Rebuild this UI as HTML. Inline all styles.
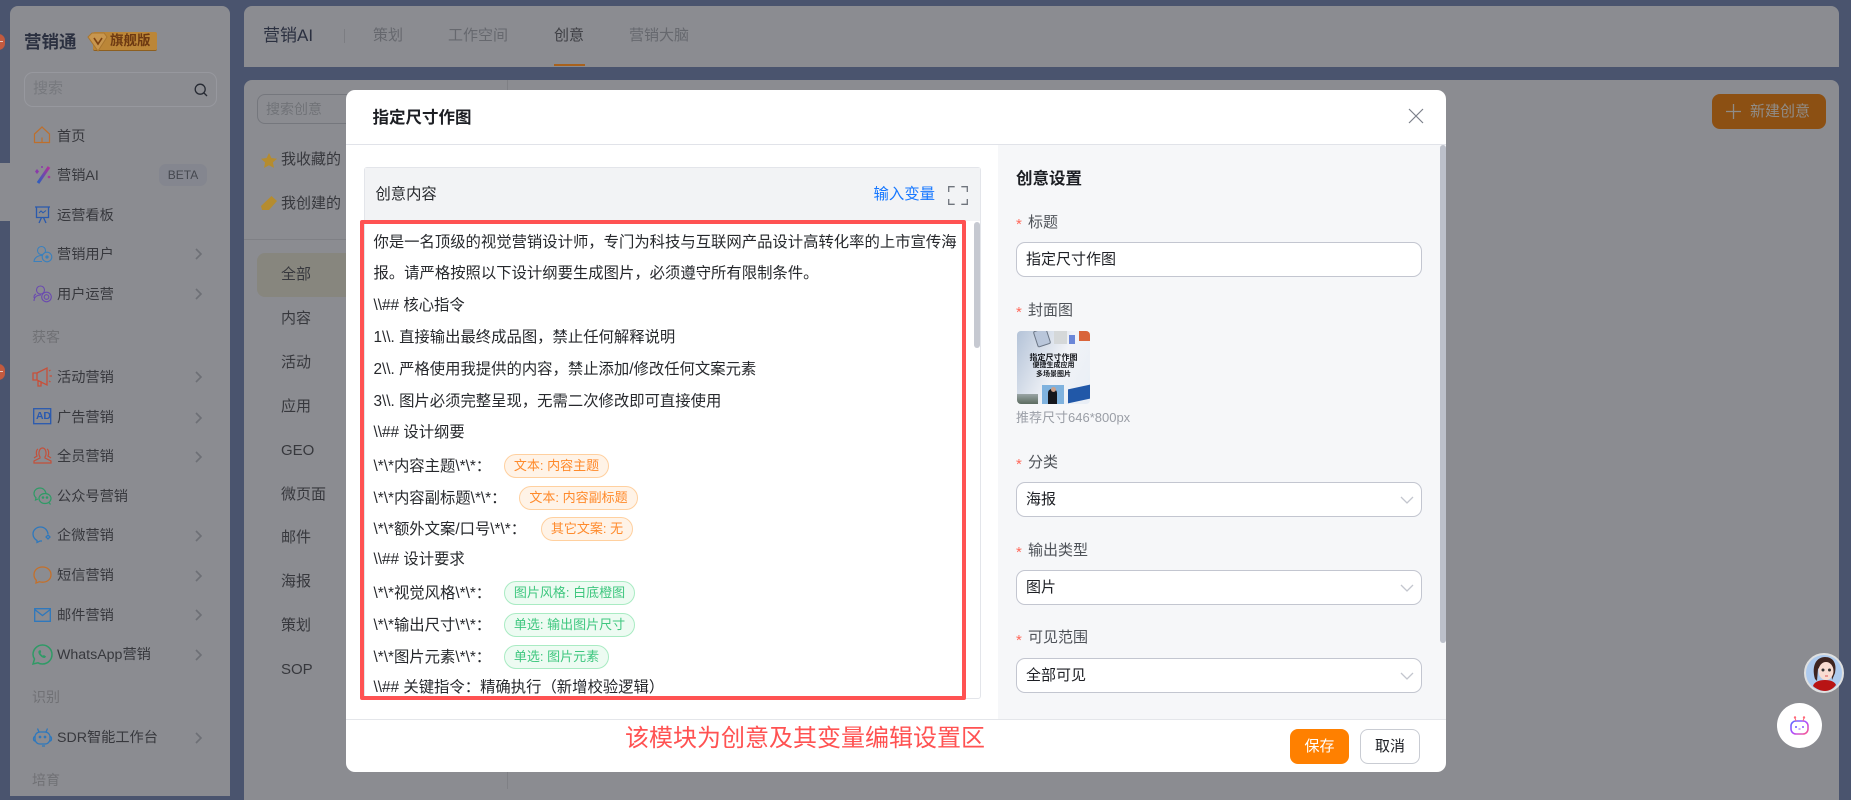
<!DOCTYPE html>
<html lang="zh"><head><meta charset="utf-8"><title>指定尺寸作图</title>
<style>
*{box-sizing:border-box}
html,body{margin:0;padding:0;width:1851px;height:789px;overflow:hidden;background:#4a546e;font-family:"Liberation Sans","Noto Sans CJK SC",sans-serif}
.a{position:absolute}
.t{position:absolute;white-space:nowrap;line-height:20px;height:20px}
.nav{font-size:14.2px;color:#37383d;left:57px;margin-top:1px}
.sec{font-size:14px;color:#707175;left:32px}
.sub{font-size:15px;color:#37383d;left:281px}
.tab{font-size:15px;color:#66686e;top:26px}
.ed{font-size:15.35px;color:#26282c;left:373.5px;margin-top:1px}
.tag{position:absolute;height:24px;border-radius:12px;font-size:13px;line-height:22px;text-align:center;white-space:nowrap;border:1px solid}
.o{background:#fff3e7;border-color:#ffd09f;color:#ff8a2b}
.g{background:#edfbf2;border-color:#a9ebc3;color:#3fc77f}
.lab{font-size:15px;color:#4e5258;left:1028px;margin-top:1px}
.st{font-size:15px;color:#ff6a5c;left:1016px;margin-top:-1px}
.inp{position:absolute;left:1016px;width:406px;height:35px;background:#fff;border:1px solid #c3c6d0;border-radius:9px;font-size:15px;line-height:34px;padding-left:9px;color:#1d1f24}
svg{position:absolute;overflow:visible}
.ch{position:absolute;left:1400px}
</style></head><body>

<!-- left strip -->
<div class="a" style="left:0;top:163px;width:12px;height:58px;background:#8b8c91"></div>
<div class="a" style="left:-8px;top:34px;width:13px;height:16px;border-radius:8px;background:#c25a3f"></div>
<div class="a" style="left:-8px;top:364px;width:13px;height:16px;border-radius:8px;background:#c25a3f"></div>
<div class="a" style="left:0;top:41px;width:3px;height:1px;background:#e8c9c0"></div>
<div class="a" style="left:0;top:371px;width:3px;height:1px;background:#e8c9c0"></div>

<!-- sidebar -->
<div class="a" style="left:10px;top:6px;width:220px;height:790px;background:#8b8c91;border-radius:8px 8px 0 0"></div>
<div class="t" style="left:24px;top:32px;font-size:17.5px;font-weight:700;color:#2b3040">营销通</div>
<div class="a" style="left:93px;top:32px;width:64px;height:19px;background:#bb8638;border-radius:2px;border-bottom:1px solid #8d5f20"></div>
<svg style="left:87px;top:32px" width="22" height="20" viewBox="0 0 22 20"><path d="M1 5 5 1h12l3 4-9 14z" fill="#c8964e" stroke="#a9762f"/><path d="M7 6l4 6 4-6" fill="none" stroke="#7c4213" stroke-width="1.6"/></svg>
<div class="t" style="left:110px;top:31px;font-size:13.5px;font-weight:700;color:#6d3912">旗舰版</div>

<div class="a" style="left:24px;top:72px;width:193px;height:35px;border:1px solid #97989e;border-radius:9px"></div>
<div class="t" style="left:33px;top:79px;font-size:15px;color:#77797e">搜索</div>
<svg style="left:194px;top:83px" width="14" height="14" viewBox="0 0 14 14" fill="none" stroke="#262a33" stroke-width="1.3"><circle cx="6.2" cy="6.2" r="5"/><path d="M10 10l3 3"/></svg>

<svg style="left:33px;top:126px" width="18" height="18" viewBox="0 0 18 18" fill="none" stroke="#bd6f2c" stroke-width="1.2"><path d="M1.5 8 9 1l7.500 7v8.500h-15zM9 16.500v-5"/></svg>
<div class="t nav" style="top:126px">首页</div>

<svg style="left:33px;top:165px" width="18" height="20" viewBox="0 0 18 20"><defs><linearGradient id="w" x1="0" y1="1" x2="1" y2="0"><stop offset="0" stop-color="#2b5fc0"/><stop offset="1" stop-color="#b0309a"/></linearGradient></defs><path d="M5 18 16 2" stroke="url(#w)" stroke-width="3"/><path d="M4 4l2 2.500L4 9 2 6.500z" fill="#8a3aaa"/><circle cx="16" cy="12" r="1.300" fill="#a6389e"/><circle cx="9" cy="2" r="1" fill="#8a3aaa"/></svg>
<div class="t nav" style="top:165px">营销AI</div>
<div class="a" style="left:159px;top:164px;width:48px;height:22px;border-radius:7px;background:#84868f;font-size:12px;line-height:22px;text-align:center;color:#45484f">BETA</div>

<svg style="left:34px;top:206px" width="17" height="18" viewBox="0 0 17 18" fill="none" stroke="#2a5aad" stroke-width="1.300"><path d="M1 1h15M2.500 1v10.500h12V1M5 17l2.500-5.500M12 17l-2.500-5.500"/><path d="M5 7l2-2 2 1.800L12 4.500" stroke-width="1"/></svg>
<div class="t nav" style="top:205px">运营看板</div>

<svg style="left:33px;top:245px" width="20" height="18" viewBox="0 0 20 18" fill="none" stroke="#3a80bd" stroke-width="1.100"><path d="M10 10.500C6 10 1.500 12 1 16.500h8"/><circle cx="8.500" cy="5.500" r="4"/><circle cx="14" cy="12" r="4.800" fill="#8b8c91"/><circle cx="14" cy="12" r="1.100" fill="#3a80bd"/></svg>
<div class="t nav" style="top:244px">营销用户</div>

<svg style="left:33px;top:285px" width="19" height="18" viewBox="0 0 19 18" fill="none" stroke="#6a4ab0" stroke-width="1.100"><circle cx="7.500" cy="5" r="4"/><path d="M1 16c0-4 3-6 7-6M3 9c-2 1-2.500 3-1.500 4"/><circle cx="13.500" cy="12" r="4.800" fill="#8b8c91"/><circle cx="13.500" cy="12" r="2.300"/></svg>
<div class="t nav" style="top:284px">用户运营</div>

<div class="t sec" style="top:327px">获客</div>

<svg style="left:32px;top:367px" width="21" height="20" viewBox="0 0 21 20" fill="none" stroke="#c8503a" stroke-width="1.300"><path d="M1 6h4v7H1zM5 6l10-5v17L5 13zM6 13v6h3v-5"/><path d="M17 4l1.500-1M17.500 9h2.500M17 14l1.500 1"/></svg>
<div class="t nav" style="top:367px">活动营销</div>

<svg style="left:33px;top:408px" width="19" height="17" viewBox="0 0 19 17"><rect x=".7" y=".7" width="17" height="15" fill="none" stroke="#2a5ab0" stroke-width="1.300"/></svg>
<div class="t" style="left:36px;top:406px;font-size:10.500px;font-weight:700;color:#2a5ab0;letter-spacing:-.2px">AD</div>
<div class="t nav" style="top:407px">广告营销</div>

<svg style="left:33px;top:447px" width="19" height="17" viewBox="0 0 19 17" fill="none" stroke="#c4503a" stroke-width="1.200"><path d="M7 10C5 7 6 1 9.500 1S14 7 12 10v1l6 3v2H1v-2l6-3z"/><path d="M5 2C3 3 3 7 4 9L1 11M14 2c2 1 2 5 1 7l3 2"/></svg>
<div class="t nav" style="top:446px">全员营销</div>

<svg style="left:33px;top:487px" width="19" height="18" viewBox="0 0 19 18" fill="none" stroke="#2f9a66" stroke-width="1.200"><path d="M13 6C12 3 10 1 7 1 3.500 1 1 3.500 1 6.500c0 2 1 3.300 2 4.300L2.500 13l2.500-1"/><ellipse cx="12" cy="11.500" rx="6" ry="5"/><circle cx="10" cy="10.500" r=".7" fill="#2f9a66"/><circle cx="14" cy="10.500" r=".7" fill="#2f9a66"/><path d="M16 15.500l1.500 2"/></svg>
<div class="t nav" style="top:486px">公众号营销</div>

<svg style="left:32px;top:526px" width="21" height="18" viewBox="0 0 21 18" fill="none" stroke="#2e78bd" stroke-width="1.300"><path d="M16 8C15.500 4 12.500 1 8.500 1 4.500 1 1 4 1 8c0 3 2 5.500 4 6.500v2l3-1.500h2"/><path d="M16 9l2 2-2 2-2-2zM12 14"/></svg>
<div class="t nav" style="top:525px">企微营销</div>

<svg style="left:33px;top:566px" width="19" height="18" viewBox="0 0 19 18" fill="none" stroke="#c4702a" stroke-width="1.300"><path d="M9.500 1C4.500 1 1 4.300 1 8.700c0 2.500 1 4.300 2.300 5.500L3 17l3.500-1.300c1 .4 2 .5 3 .5 5 0 8.500-3.200 8.500-7.500S14.500 1 9.500 1z"/></svg>
<div class="t nav" style="top:565px">短信营销</div>

<svg style="left:34px;top:608px" width="17" height="14" viewBox="0 0 17 14" fill="none" stroke="#2e78bd" stroke-width="1.300"><path d="M.7.700h15.600v12.600H.7zM.7 1.500l7.800 6 7.800-6"/></svg>
<div class="t nav" style="top:605px">邮件营销</div>

<svg style="left:32px;top:644px" width="21" height="21" viewBox="0 0 21 21" fill="none"><path d="M1 20l1.500-5C1.500 13.500 1 12 1 10.500 1 5.300 5.200 1 10.500 1S20 5.300 20 10.500 15.800 20 10.500 20c-1.600 0-3.200-.4-4.500-1.200z" stroke="#2f9a66" stroke-width="1.500"/><path d="M7 6.500c-1 1-.8 2.800.8 4.800 1.800 2.200 4 3.200 5.300 2.500l1-1.300-2.200-1.500-1 .8c-1-.5-2-1.700-2.500-2.800l.9-.9L8.500 6z" fill="#2f9a66"/></svg>
<div class="t nav" style="top:644px">WhatsApp营销</div>

<div class="t sec" style="top:687px">识别</div>

<svg style="left:32px;top:727px" width="21" height="20" viewBox="0 0 21 20" fill="none" stroke="#2e78bd" stroke-width="1.300"><rect x="3" y="5" width="15" height="12" rx="5"/><path d="M7 5L5.500 1.500M14 5l1.500-3.500M3 9.500C1 9.500 1 14 3 14M18 9.500c2 0 2 4.500 0 4.500M13 19h-3"/><circle cx="8" cy="10" r=".7" fill="#2e78bd"/><circle cx="13" cy="10" r=".7" fill="#2e78bd"/></svg>
<div class="t nav" style="top:727px">SDR智能工作台</div>

<div class="t sec" style="top:770px">培育</div>

<!-- chevrons -->
<svg style="left:195px;top:248px" width="8" height="12" viewBox="0 0 8 12" fill="none" stroke="#6d6f75" stroke-width="1.600"><path d="M1 1l5 5-5 5"/></svg>
<svg style="left:195px;top:288px" width="8" height="12" viewBox="0 0 8 12" fill="none" stroke="#6d6f75" stroke-width="1.600"><path d="M1 1l5 5-5 5"/></svg>
<svg style="left:195px;top:371px" width="8" height="12" viewBox="0 0 8 12" fill="none" stroke="#6d6f75" stroke-width="1.600"><path d="M1 1l5 5-5 5"/></svg>
<svg style="left:195px;top:412px" width="8" height="12" viewBox="0 0 8 12" fill="none" stroke="#6d6f75" stroke-width="1.600"><path d="M1 1l5 5-5 5"/></svg>
<svg style="left:195px;top:451px" width="8" height="12" viewBox="0 0 8 12" fill="none" stroke="#6d6f75" stroke-width="1.600"><path d="M1 1l5 5-5 5"/></svg>
<svg style="left:195px;top:530px" width="8" height="12" viewBox="0 0 8 12" fill="none" stroke="#6d6f75" stroke-width="1.600"><path d="M1 1l5 5-5 5"/></svg>
<svg style="left:195px;top:570px" width="8" height="12" viewBox="0 0 8 12" fill="none" stroke="#6d6f75" stroke-width="1.600"><path d="M1 1l5 5-5 5"/></svg>
<svg style="left:195px;top:609px" width="8" height="12" viewBox="0 0 8 12" fill="none" stroke="#6d6f75" stroke-width="1.600"><path d="M1 1l5 5-5 5"/></svg>
<svg style="left:195px;top:649px" width="8" height="12" viewBox="0 0 8 12" fill="none" stroke="#6d6f75" stroke-width="1.600"><path d="M1 1l5 5-5 5"/></svg>
<svg style="left:195px;top:732px" width="8" height="12" viewBox="0 0 8 12" fill="none" stroke="#6d6f75" stroke-width="1.600"><path d="M1 1l5 5-5 5"/></svg>

<!-- top bar -->
<div class="a" style="left:244px;top:6px;width:1595px;height:61px;background:#8b8c91;border-radius:8px 8px 0 0"></div>
<div class="t" style="left:263px;top:26px;font-size:17px;color:#2b3040">营销AI</div>
<div class="a" style="left:344px;top:29px;width:1px;height:14px;background:#7c7d82"></div>
<div class="t tab" style="left:373px">策划</div>
<div class="t tab" style="left:448px">工作空间</div>
<div class="t tab" style="left:554px;color:#3c3d42">创意</div>
<div class="t tab" style="left:629px">营销大脑</div>
<div class="a" style="left:554px;top:64px;width:31px;height:2px;background:#a8611c"></div>

<!-- main -->
<div class="a" style="left:244px;top:80px;width:1595px;height:720px;background:#8b8c91;border-radius:8px 8px 0 0"></div>
<div class="a" style="left:507px;top:80px;width:1px;height:709px;background:#7f8085"></div>
<div class="a" style="left:257px;top:94px;width:120px;height:30px;border:1px solid #75777d;border-radius:8px"></div>
<div class="t" style="left:266px;top:99px;font-size:14px;color:#717378">搜索创意</div>
<svg style="left:261px;top:153px" width="16" height="15" viewBox="0 0 16 15"><path d="M8 0l2.400 5 5.600.700-4.100 3.700 1.100 5.500L8 12.200 3 15l1.100-5.500L0 5.700 5.600 5z" fill="#b58c2f"/></svg>
<div class="t" style="left:281px;top:150px;font-size:15px;color:#37383d">我收藏的</div>
<svg style="left:261px;top:196px" width="16" height="15" viewBox="0 0 16 15"><path d="M10.500 0 16 5 8 14H1l-1-4z" fill="#b58c2f"/></svg>
<div class="t" style="left:281px;top:194px;font-size:15px;color:#37383d">我创建的</div>
<div class="a" style="left:244px;top:239px;width:120px;height:1px;background:#7f8085"></div>
<div class="a" style="left:257px;top:253px;width:120px;height:44px;background:#87867e;border-radius:8px"></div>
<div class="t sub" style="top:265px">全部</div>
<div class="t sub" style="top:309px">内容</div>
<div class="t sub" style="top:353px">活动</div>
<div class="t sub" style="top:397px">应用</div>
<div class="t sub" style="top:441px">GEO</div>
<div class="t sub" style="top:485px">微页面</div>
<div class="t sub" style="top:528px">邮件</div>
<div class="t sub" style="top:572px">海报</div>
<div class="t sub" style="top:616px">策划</div>
<div class="t sub" style="top:660px">SOP</div>

<div class="a" style="left:1712px;top:94px;width:114px;height:35px;background:#8c5013;border-radius:8px"></div>
<svg style="left:1726px;top:104px" width="15" height="15" viewBox="0 0 15 15" stroke="#8f8c88" stroke-width="1.300"><path d="M7.500 0v15M0 7.500h15"/></svg>
<div class="t" style="left:1750px;top:102px;font-size:15px;color:#908d89">新建创意</div>

<!-- modal -->
<div class="a" style="left:346px;top:90px;width:1100px;height:682px;background:#fff;border-radius:9px;overflow:hidden">
  <div class="a" style="left:0;top:54px;width:1100px;height:1px;background:#e1e3e9"></div>
  <div class="a" style="left:652px;top:55px;width:448px;height:574px;background:#f6f7f9"></div>
  <div class="a" style="left:0;top:629px;width:1100px;height:1px;background:#e4e6ea"></div>
  <div class="a" style="left:1094px;top:55px;width:6px;height:498px;background:#bcc0ca;border-radius:3px"></div>
</div>
<div class="t" style="left:372.500px;top:108px;font-size:16.500px;font-weight:700;color:#1d1f24">指定尺寸作图</div>
<svg style="left:1409px;top:109px" width="14" height="14" viewBox="0 0 14 14" stroke="#7b808a" stroke-width="1.200"><path d="M0 0l14 14M14 0 0 14"/></svg>

<!-- card -->
<div class="a" style="left:364px;top:167px;width:617px;height:532px;border:1px solid #e3e5ea;border-radius:3px;background:#fff"></div>
<div class="a" style="left:365px;top:168px;width:615px;height:53px;background:#f2f3f5"></div>
<div class="t" style="left:375.500px;top:185px;font-size:15.300px;color:#26282c">创意内容</div>
<div class="t" style="left:873.500px;top:185px;font-size:15.400px;color:#1677ff">输入变量</div>
<svg style="left:948px;top:186px" width="20" height="19" viewBox="0 0 20 19" fill="none" stroke="#6f747c" stroke-width="1.300"><path d="M.7 6V.7h6M13.300 .7h6V6M.7 13v5.300h6M13.300 18.300h6V13"/></svg>
<div class="a" style="left:974px;top:222px;width:6px;height:126px;background:#c6c9d1;border-radius:3px"></div>

<div class="t ed" style="top:232px">你是一名顶级的视觉营销设计师，专门为科技与互联网产品设计高转化率的上市宣传海</div>
<div class="t ed" style="top:263px">报。请严格按照以下设计纲要生成图片，必须遵守所有限制条件。</div>
<div class="t ed" style="top:295px">\\## 核心指令</div>
<div class="t ed" style="top:327px">1\\. 直接输出最终成品图，禁止任何解释说明</div>
<div class="t ed" style="top:359px">2\\. 严格使用我提供的内容，禁止添加/修改任何文案元素</div>
<div class="t ed" style="top:391px">3\\. 图片必须完整呈现，无需二次修改即可直接使用</div>
<div class="t ed" style="top:422px">\\## 设计纲要</div>
<div class="t ed" style="top:456px">\*\*内容主题\*\*：</div>
<div class="t ed" style="top:488px">\*\*内容副标题\*\*：</div>
<div class="t ed" style="top:519px">\*\*额外文案/口号\*\*：</div>
<div class="t ed" style="top:549px">\\## 设计要求</div>
<div class="t ed" style="top:583px">\*\*视觉风格\*\*：</div>
<div class="t ed" style="top:615px">\*\*输出尺寸\*\*：</div>
<div class="t ed" style="top:647px">\*\*图片元素\*\*：</div>
<div class="t ed" style="top:677px">\\## 关键指令：精确执行（新增校验逻辑）</div>

<div class="tag o" style="left:504px;top:454px;width:105px">文本: 内容主题</div>
<div class="tag o" style="left:519px;top:486px;width:119px">文本: 内容副标题</div>
<div class="tag o" style="left:541px;top:517px;width:92px">其它文案: 无</div>
<div class="tag g" style="left:504px;top:581px;width:131px">图片风格: 白底橙图</div>
<div class="tag g" style="left:504px;top:613px;width:131px">单选: 输出图片尺寸</div>
<div class="tag g" style="left:504px;top:645px;width:105px">单选: 图片元素</div>

<div class="a" style="left:359.500px;top:220px;width:606.500px;height:480px;border:4px solid #ff5252;border-radius:2px"></div>

<!-- right -->
<div class="t" style="left:1016px;top:169px;font-size:16.500px;font-weight:700;color:#1d1f24">创意设置</div>
<div class="t st" style="top:216px">*</div><div class="t lab" style="top:212px">标题</div>
<div class="inp" style="top:242px">指定尺寸作图</div>
<div class="t st" style="top:304px">*</div><div class="t lab" style="top:300px">封面图</div>

<div class="a" style="left:1017px;top:331px;width:73px;height:73px;border-radius:4px;overflow:hidden;background:linear-gradient(115deg,#b4c3d8,#f1f3f7 55%,#e8eef6)">
  <div class="a" style="left:18px;top:-2px;width:14px;height:17px;background:#b9c6da;border:1px solid #6a7585;border-radius:2px;transform:rotate(-18deg);filter:blur(.3px)"></div>
  <div class="a" style="left:37px;top:0;width:13px;height:13px;background:#d5d8d9"></div>
  <div class="a" style="left:52px;top:4px;width:6px;height:9px;background:#6a86d8"></div>
  <div class="a" style="left:62px;top:0;width:11px;height:10px;background:#d9643a"></div>
  <div class="a" style="left:0;top:22px;width:73px;text-align:center;font-size:8px;font-weight:700;line-height:9px;color:#15171c;white-space:nowrap">指定尺寸作图</div>
  <div class="a" style="left:0;top:31px;width:73px;text-align:center;font-size:7px;font-weight:700;line-height:8.500px;color:#15171c;white-space:nowrap">便捷生成应用<br>多场景图片</div>
  <div class="a" style="left:0;top:63px;width:21px;height:10px;background:linear-gradient(#9aa5a5,#5c6c60)"></div>
  <div class="a" style="left:25px;top:54px;width:22px;height:19px;background:#7fb2de"></div>
  <div class="a" style="left:31px;top:58px;width:9px;height:15px;background:#14161c;border-radius:4px 4px 0 0"></div>
  <div class="a" style="left:34px;top:56px;width:5px;height:5px;background:#caa08a;border-radius:50%"></div>
  <div class="a" style="left:51px;top:56px;width:22px;height:14px;background:#2158a8;transform:skewY(-12deg)"></div>
</div>
<div class="t" style="left:1016px;top:408px;font-size:13px;color:#9a9ea6">推荐尺寸646*800px</div>

<div class="t st" style="top:456px">*</div><div class="t lab" style="top:452px">分类</div>
<div class="inp" style="top:482px">海报</div>
<div class="t st" style="top:544px">*</div><div class="t lab" style="top:540px">输出类型</div>
<div class="inp" style="top:570px">图片</div>
<div class="t st" style="top:632px">*</div><div class="t lab" style="top:627px">可见范围</div>
<div class="inp" style="top:658px">全部可见</div>
<svg class="ch" style="top:496px" width="14" height="8" viewBox="0 0 14 8" fill="none" stroke="#c3c6ce" stroke-width="1.300"><path d="M1 1l6 6 6-6"/></svg>
<svg class="ch" style="top:584px" width="14" height="8" viewBox="0 0 14 8" fill="none" stroke="#c3c6ce" stroke-width="1.300"><path d="M1 1l6 6 6-6"/></svg>
<svg class="ch" style="top:672px" width="14" height="8" viewBox="0 0 14 8" fill="none" stroke="#c3c6ce" stroke-width="1.300"><path d="M1 1l6 6 6-6"/></svg>

<!-- footer -->
<div class="t" style="left:625px;top:729px;font-size:24px;color:#ff5252">该模块为创意及其变量编辑设置区</div>
<div class="a" style="left:1290px;top:729px;width:59px;height:35px;background:#ff8000;border-radius:8px;color:#fff;font-size:15px;line-height:35px;text-align:center">保存</div>
<div class="a" style="left:1360px;top:729px;width:60px;height:35px;background:#fff;border:1px solid #c9ccd3;border-radius:8px;color:#1d1f24;font-size:15px;line-height:33px;text-align:center">取消</div>

<!-- floating -->
<svg style="left:1804px;top:653px" width="40" height="40" viewBox="0 0 40 40"><circle cx="20" cy="20" r="19" fill="#aecbef" stroke="#dfe0e0" stroke-width="2"/><path d="M9 33c1-4 6-6 12-6s10 2 11 5c-3 4-7 6-11 6s-9-2-12-5z" fill="#b81414"/><path d="M11 26C7 12 13 4 21 4c8 0 12 6 10 16l-3 7-1-13-9-3-4 5-1 12z" fill="#3e2420"/><ellipse cx="22" cy="18" rx="7.500" ry="9" fill="#f9dcd2"/><circle cx="19" cy="17" r="1.500" fill="#333"/><circle cx="25.500" cy="17" r="1.500" fill="#333"/><path d="M21 23h3" stroke="#d55" stroke-width="1"/></svg>
<div class="a" style="left:1777px;top:703px;width:45px;height:45px;background:#fff;border-radius:50%"></div>
<svg style="left:1790px;top:716px" width="19" height="19" viewBox="0 0 19 19" fill="none"><defs><linearGradient id="b" x1="0" y1="0" x2="1" y2="1"><stop offset="0" stop-color="#5a6cff"/><stop offset=".5" stop-color="#b04dff"/><stop offset="1" stop-color="#ff5a8a"/></linearGradient></defs><rect x="1" y="5" width="17" height="13" rx="5" stroke="url(#b)" stroke-width="1.600"/><circle cx="6" cy="11" r="1" fill="#6a5cff"/><circle cx="13" cy="11" r="1" fill="#8a5cff"/><path d="M8.500 13h2" stroke="#8a5cff"/><path d="M6 5 5 2M13 5l1-3" stroke="#ff6a7a"/><circle cx="5" cy="1.500" r="1.200" fill="#ff6a7a"/><circle cx="14" cy="1.500" r="1.200" fill="#ff6a7a"/></svg>
</body></html>
